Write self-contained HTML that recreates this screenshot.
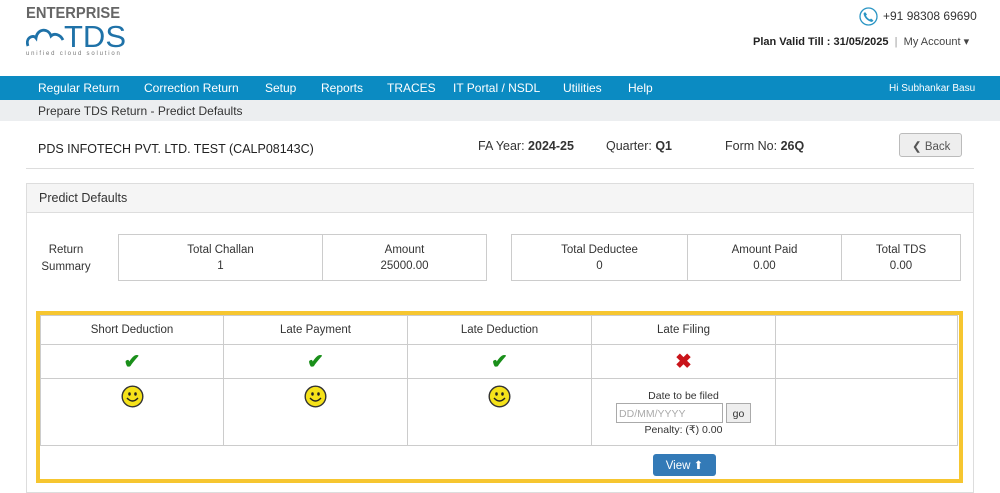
<!DOCTYPE html>
<html><head><meta charset="utf-8"><style>
*{box-sizing:border-box;margin:0;padding:0}
body{width:1000px;height:486px;overflow:hidden;background:#fff;font-family:"Liberation Sans",sans-serif;color:#333;position:relative;font-size:12px}
.a{position:absolute}
.nav{left:0;top:76px;width:1000px;height:24px;background:#0b8bc2}
.nav span{position:absolute;top:5px;color:#fff;font-size:12px}
.bc{left:0;top:100px;width:1000px;height:21px;background:#eceef0;font-size:12px;color:#333;padding:4px 0 0 38px}
.box{border:1px solid #ccc;display:flex}
.box div{flex:none;text-align:center;font-size:11.5px;line-height:16px;padding-top:7px;border-left:1px solid #ccc;height:100%}
.box div:first-child{border-left:none}
table{border-collapse:collapse;position:absolute;left:40px;top:315px;width:918px}
td{border:1px solid #ccc;text-align:center;font-size:11.5px;color:#333}
.ck{color:#1a8f1a;font-size:20px;font-weight:bold}
.sm{display:inline-block;width:23px;height:23px;position:relative}
</style></head><body>
<div class="a" style="left:26px;top:5px;font-size:16px;font-weight:bold;color:#666;letter-spacing:0;transform:scaleX(0.92);transform-origin:left">ENTERPRISE</div>
<svg class="a" style="left:26px;top:24px" width="40" height="26" viewBox="0 0 40 26"><path d="M2 22 C-1 14 7 10 10 14 C11 5 22 3 25 12 C28 9 34 10 37 16" fill="none" stroke="#1f72a8" stroke-width="2.8"/></svg>
<div class="a" style="left:64px;top:19px;font-size:31px;color:#1f72a8;letter-spacing:0">TDS</div>
<div class="a" style="left:26px;top:51px;font-size:6px;color:#777;letter-spacing:1.8px">unified cloud solution</div>
<svg class="a" style="left:859px;top:7px" width="19" height="19" viewBox="0 0 19 19"><circle cx="9.5" cy="9.5" r="8.5" fill="none" stroke="#2a95c4" stroke-width="1.3"/><path d="M6 5 L8 7.5 L7 8.5 C8 10.5 9 11.5 11 12.5 L12 11.5 L14.5 13.5 L13 15 C9 14.5 5 10.5 4.5 6.5Z" fill="#2a95c4"/></svg>
<div class="a" style="left:883px;top:9px;font-size:12px;color:#333">+91 98308 69690</div>
<div class="a" style="left:753px;top:35px;font-size:11px;color:#222"><b>Plan Valid Till : 31/05/2025</b> <span style="color:#999">&nbsp;|&nbsp;</span> <span style="color:#444">My Account ▾</span></div>
<div class="a nav"><span style="left:38px">Regular Return</span><span style="left:144px">Correction Return</span><span style="left:265px">Setup</span><span style="left:321px">Reports</span><span style="left:387px">TRACES</span><span style="left:453px">IT Portal / NSDL</span><span style="left:563px">Utilities</span><span style="left:628px">Help</span><span style="left:889px;top:7px;font-size:10px">Hi Subhankar Basu</span></div>
<div class="a bc">Prepare TDS Return - Predict Defaults</div>
<div class="a" style="left:38px;top:142px;font-size:12.5px;color:#222">PDS INFOTECH PVT. LTD. TEST (CALP08143C)</div>
<div class="a" style="left:478px;top:139px;font-size:12.5px">FA Year: <b>2024-25</b></div>
<div class="a" style="left:606px;top:139px;font-size:12.5px">Quarter: <b>Q1</b></div>
<div class="a" style="left:725px;top:139px;font-size:12.5px">Form No: <b>26Q</b></div>
<div class="a" style="left:899px;top:133px;width:63px;height:24px;border:1px solid #bbb;border-radius:3px;background:#eee;font-size:11.5px;color:#555;padding:5px 0 0 12px">❮ Back</div>
<div class="a" style="left:26px;top:168px;width:948px;border-top:1px solid #ddd"></div>
<div class="a" style="left:26px;top:183px;width:948px;height:310px;border:1px solid #ddd"></div>
<div class="a" style="left:27px;top:184px;width:946px;height:29px;background:#f5f5f5;border-bottom:1px solid #ddd;font-size:12.5px;padding:7px 0 0 12px">Predict Defaults</div>
<div class="a" style="left:38px;top:242px;width:56px;text-align:center;font-size:11.5px;line-height:17px">Return Summary</div>
<div class="a box" style="left:118px;top:234px;width:369px;height:47px"><div style="width:203px">Total Challan<br>1</div><div style="width:164px">Amount<br>25000.00</div></div>
<div class="a box" style="left:511px;top:234px;width:450px;height:47px"><div style="width:175px">Total Deductee<br>0</div><div style="width:154px">Amount Paid<br>0.00</div><div style="width:119px">Total TDS<br>0.00</div></div>
<div class="a" style="left:36px;top:311px;width:927px;height:172px;border:4px solid #f6c630"></div>
<table>
<tr style="height:29px"><td style="width:183px">Short Deduction</td><td style="width:184px">Late Payment</td><td style="width:184px">Late Deduction</td><td style="width:184px">Late Filing</td><td></td></tr>
<tr style="height:34px"><td class="ck">✔</td><td class="ck">✔</td><td class="ck">✔</td><td style="color:#c9141a;font-size:20px;font-weight:bold">✖</td><td></td></tr>
<tr style="height:67px">
<td style="vertical-align:top;padding-top:6px"><svg class="sm" viewBox="0 0 23 23"><circle cx="11.5" cy="11.5" r="10.3" fill="#f5e21a" stroke="#333" stroke-width="1.4"/><ellipse cx="8.5" cy="9" rx="1.3" ry="1.7" fill="#222"/><ellipse cx="14.5" cy="9" rx="1.3" ry="1.7" fill="#222"/><path d="M6 13 Q11.5 19 17 13" fill="none" stroke="#222" stroke-width="1.4"/></svg></td>
<td style="vertical-align:top;padding-top:6px"><svg class="sm" viewBox="0 0 23 23"><circle cx="11.5" cy="11.5" r="10.3" fill="#f5e21a" stroke="#333" stroke-width="1.4"/><ellipse cx="8.5" cy="9" rx="1.3" ry="1.7" fill="#222"/><ellipse cx="14.5" cy="9" rx="1.3" ry="1.7" fill="#222"/><path d="M6 13 Q11.5 19 17 13" fill="none" stroke="#222" stroke-width="1.4"/></svg></td>
<td style="vertical-align:top;padding-top:6px"><svg class="sm" viewBox="0 0 23 23"><circle cx="11.5" cy="11.5" r="10.3" fill="#f5e21a" stroke="#333" stroke-width="1.4"/><ellipse cx="8.5" cy="9" rx="1.3" ry="1.7" fill="#222"/><ellipse cx="14.5" cy="9" rx="1.3" ry="1.7" fill="#222"/><path d="M6 13 Q11.5 19 17 13" fill="none" stroke="#222" stroke-width="1.4"/></svg></td>
<td style="font-size:10.5px;line-height:14px;padding-top:2px">Date to be filed<br><span style="display:inline-block;width:107px;height:20px;border:1px solid #aaa;text-align:left;color:#aaa;padding:3px 2px;vertical-align:middle">DD/MM/YYYY</span> <span style="display:inline-block;width:25px;height:20px;border:1px solid #aaa;background:#eee;vertical-align:middle;padding-top:3px;color:#333">go</span><br>Penalty: (₹) 0.00</td><td></td></tr>
<tr style="height:33px"><td colspan="5" style="border:none;border-top:1px solid #ccc"></td></tr>
</table>
<div class="a" style="left:653px;top:454px;width:63px;height:22px;background:#337ab7;border-radius:3px;color:#fff;font-size:11.5px;padding-top:4px;text-align:center">View ⬆</div>
</body></html>
